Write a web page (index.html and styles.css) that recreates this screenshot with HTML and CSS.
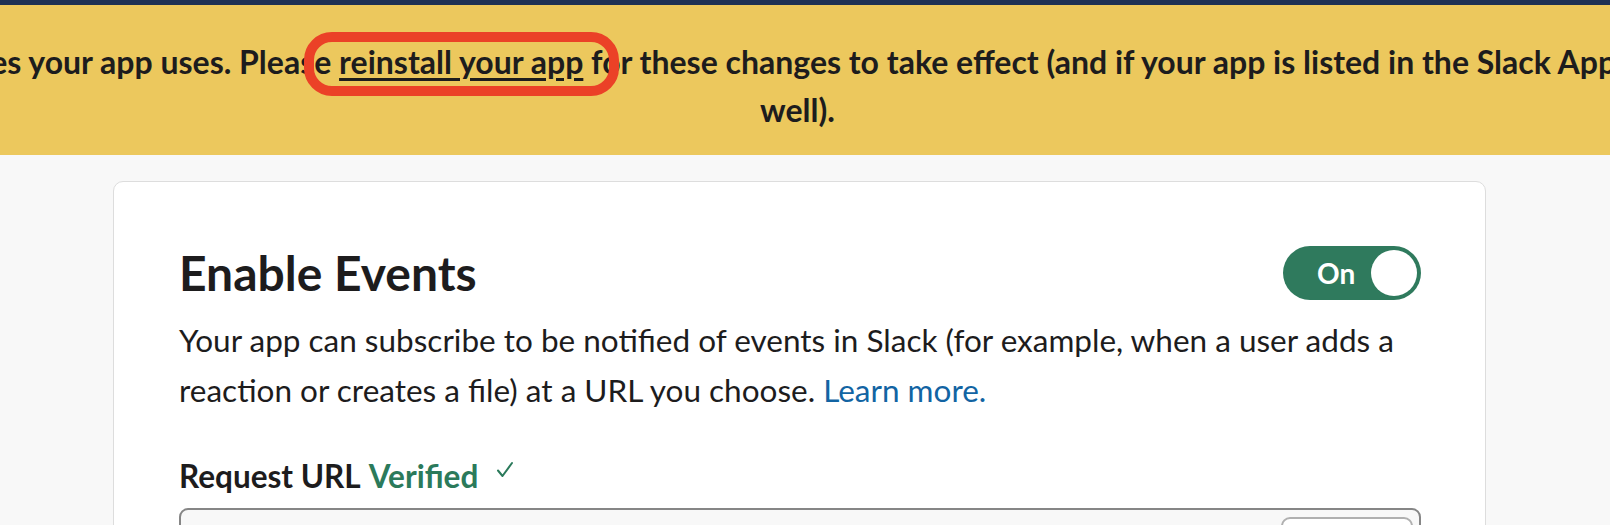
FILE: index.html
```html
<!DOCTYPE html>
<html lang="en">
<head>
<meta charset="utf-8">
<title>Event Subscriptions</title>
<link rel="stylesheet" href="styles.css">
</head>
<body>
<div class="topbar"></div>
<div class="banner">
  <p class="banner-line banner-line--first">You've changed the permission scopes your app uses. Please <a class="banner-link" href="#">reinstall your app</a> for these changes to take effect (and if your app is listed in the Slack App Directory, you'll need to resubmit it as</p>
  <p class="banner-line banner-line--last">well).</p>
</div>
<main class="page">
  <section class="card">
    <div class="card-header">
      <h1 class="card-title">Enable Events</h1>
      <button class="toggle" type="button"><span class="toggle-label">On</span><span class="toggle-knob"></span></button>
    </div>
    <p class="card-desc">Your app can subscribe to be notified of events in Slack (for example, when a user adds a reaction or creates a file) at a URL you choose. <a href="#" class="link">Learn more.</a></p>
    <div class="field-label">
      <span>Request URL</span>
      <span class="verified">Verified</span>
      <svg class="check" width="18" height="18" viewBox="0 0 18 18" aria-hidden="true"><path d="M2 9.5 L6.5 15 L16 2" fill="none" stroke="#2b7a5b" stroke-width="2" stroke-linecap="round" stroke-linejoin="round"/></svg>
    </div>
    <div class="url-input">
      <span class="url-text"></span>
      <button class="change-btn" type="button"></button>
    </div>
  </section>
</main>
</body>
</html>
```
FILE: styles.css
```css
* { box-sizing: border-box; }
html, body { margin: 0; }
body {
  background: #f8f8f8;
  font-family: Lato, "Noto Sans", sans-serif;
  color: #1d1c1d;
  overflow: hidden;
  height: 525px;
}
.topbar { height: 5px; background: #1f3154; }
.banner {
  height: 150px;
  background: #ecc85d;
  overflow: hidden;
  padding-top: 33px;
  padding-right: 15px;
  font-weight: 700;
  font-size: 32px;
  line-height: 48px;
}
.banner-line { margin: 0; white-space: nowrap; }
.banner-line--first { text-indent: -522px; }
.banner-line--last { text-align: center; }
.banner-link {
  color: inherit;
  text-indent: 0;
  text-decoration: underline;
  text-decoration-thickness: 3px;
  text-underline-offset: 4px;
  position: relative;
  display: inline-block;
}
.banner-link::after {
  content: "";
  position: absolute;
  left: -35px;
  right: -36px;
  top: -6px;
  bottom: -10px;
  border: 10px solid #eb4127;
  border-radius: 28px;
}
.page { padding: 26px 15px 0 113px; }
.card {
  width: 1373px;
  height: 400px;
  background: #fff;
  border: 1px solid #dddddd;
  border-radius: 10px;
  padding: 64px 64px 0 65px;
}
.card-header {
  display: flex;
  justify-content: space-between;
  align-items: center;
  height: 54px;
}
.card-title {
  margin: 0;
  font-size: 48px;
  line-height: 54px;
  font-weight: 700;
}
.toggle {
  display: flex;
  align-items: center;
  justify-content: space-between;
  width: 138px;
  height: 54px;
  border: 0;
  border-radius: 27px;
  background: #2f7a5d;
  padding: 0 4px 0 34px;
  font-family: inherit;
  cursor: pointer;
}
.toggle-label { color: #fff; font-weight: 700; font-size: 28px; line-height: 1; }
.toggle-knob {
  width: 46px;
  height: 46px;
  border-radius: 50%;
  background: #fff;
}
.card-desc {
  margin: 15px 0 0;
  font-size: 31.5px;
  line-height: 50px;
}
.link { color: #1264a3; text-decoration: none; }
.field-label {
  margin-top: 41px;
  display: flex;
  align-items: center;
  gap: 8px;
  font-size: 31.5px;
  line-height: 40px;
  font-weight: 700;
}
.verified { color: #2b7a5b; }
.check { margin-left: 10px; margin-top: -12px; }
.url-input {
  margin-top: 12px;
  height: 70px;
  border: 2px solid #868686;
  border-radius: 9px;
  background: #f8f8f8;
  display: flex;
  justify-content: space-between;
  padding: 7px 6px 0 0;
}
.change-btn {
  width: 132px;
  height: 56px;
  border: 2px solid #b0b0b0;
  border-radius: 9px;
  background: #fff;
}
```
